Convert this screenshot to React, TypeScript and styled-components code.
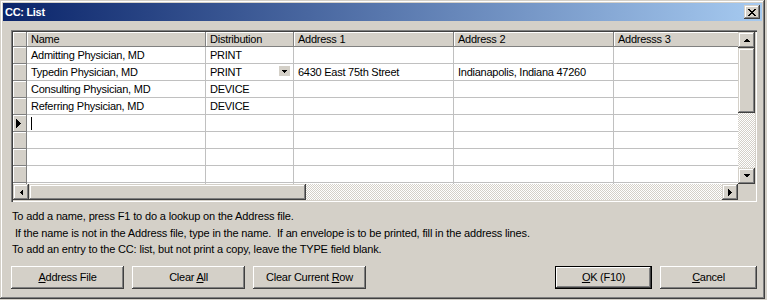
import React from "react";
import styled, { createGlobalStyle, css } from "styled-components";

const GlobalStyle = createGlobalStyle`
    html, body {
        margin: 0;
        padding: 0;
        background: #d4d0c8;
    }
    body {
        font-family: "Liberation Sans", Arial, sans-serif;
        font-size: 11px;
        letter-spacing: -0.25px;
        color: #000;
    }
`

const raised = css`
    background: #d4d0c8;
    box-shadow: inset -1px -1px #404040, inset 1px 1px #d4d0c8,
        inset -2px -2px #808080, inset 2px 2px #ffffff;
`

const Window = styled.div`
    ${raised};
    box-sizing: border-box;
    width: 765px;
    height: 299px;
    padding: 3px;
    display: flex;
    flex-direction: column;
`

const TitleBar = styled.div`
    height: 18px;
    display: flex;
    align-items: center;
    justify-content: space-between;
    padding: 0 2px;
    background: linear-gradient(to right, #0a246a, #a6caf0);
`

const TitleText = styled.span`
    color: #fff;
    font-weight: bold;
    letter-spacing: -0.3px;
`

const CloseButton = styled.div`
    ${raised};
    width: 16px;
    height: 14px;
    display: flex;
    align-items: center;
    justify-content: center;
`

const Content = styled.div`
    padding: 9px 5px 0 8px;
    display: flex;
    flex-direction: column;
`

const GridFrame = styled.div`
    box-sizing: border-box;
    width: 746px;
    height: 172px;
    padding: 2px;
    background: #d4d0c8;
    box-shadow: inset 1px 1px #808080, inset 2px 2px #404040,
        inset -1px -1px #ffffff, inset -2px -2px #d4d0c8;
`

const GridInner = styled.div`
    display: grid;
    grid-template-columns: 725px 17px;
    grid-template-rows: 152px 16px;
`

const Table = styled.div<{ $cols: string }>`
    display: grid;
    grid-template-columns: ${(p) => p.$cols};
    grid-template-rows: 15px;
    grid-auto-rows: 17px;
    background: #fff;
    overflow: hidden;
`

const HeaderCell = styled.div`
    box-sizing: border-box;
    background: #d4d0c8;
    border-right: 1px solid #808080;
    border-bottom: 1px solid #808080;
    box-shadow: inset 1px 1px #ffffff;
    padding: 0 4px;
    line-height: 14px;
    white-space: nowrap;
    overflow: hidden;
`

const RowHeader = styled.div`
    box-sizing: border-box;
    background: #d4d0c8;
    border-right: 1px solid #808080;
    border-bottom: 1px solid #808080;
    box-shadow: inset 1px 1px #ffffff;
    display: flex;
    align-items: center;
    padding-left: 3px;
`

const Cell = styled.div`
    box-sizing: border-box;
    position: relative;
    border-right: 1px solid #c0c0c0;
    border-bottom: 1px solid #c0c0c0;
    padding: 0 4px;
    line-height: 16px;
    white-space: nowrap;
    overflow: hidden;
    display: flex;
    align-items: center;
`

const Caret = styled.span`
    display: inline-block;
    width: 1px;
    height: 13px;
    background: #000;
`

const DropButton = styled.div`
    position: absolute;
    right: 3px;
    top: 2px;
    width: 11px;
    height: 10px;
    background: #d4d0c8;
    display: flex;
    align-items: center;
    justify-content: center;
`

const VScroll = styled.div`
    display: flex;
    flex-direction: column;
`

const HScroll = styled.div`
    display: flex;
`

const ScrollButton = styled.div`
    ${raised};
    flex: 0 0 16px;
    display: flex;
    align-items: center;
    justify-content: center;
`

const Thumb = styled.div<{ $size: number }>`
    ${raised};
    flex: 0 0 ${(p) => p.$size}px;
`

const Track = styled.div`
    flex: 1;
    background: repeating-conic-gradient(#ffffff 0 25%, #d4d0c8 0 50%) 0 0 / 2px 2px;
`

const Corner = styled.div`
    background: #d4d0c8;
`

const HelpText = styled.div`
    margin-top: 6px;
    padding-left: 1px;
    line-height: 16.5px;
    letter-spacing: -0.15px;
    white-space: pre;
`

const ButtonBar = styled.div`
    margin-top: 8px;
    display: flex;
    gap: 8px;
`

const Spacer = styled.div`
    flex: 1;
`

const Button = styled.div<{ $w: number; $default?: boolean }>`
    box-sizing: border-box;
    width: ${(p) => p.$w}px;
    height: 23px;
    display: flex;
    align-items: center;
    justify-content: center;
    background: #d4d0c8;
    box-shadow: inset -1px -1px #404040, inset 1px 1px #ffffff,
        inset -2px -2px #808080;
    ${(p) =>
        p.$default &&
        css`
            box-shadow: inset 0 0 0 1px #000, inset -2px -2px #404040,
                inset 2px 2px #ffffff, inset -3px -3px #808080;
        `}

    u {
        text-decoration: underline;
    }
`

const Arrow = ({ dir }: { dir: "up" | "down" | "left" | "right" }) => {
    const pts = {
        up: "0,4 7,4 3.5,0.5",
        down: "0,0 7,0 3.5,3.5",
        left: "4,0 4,7 0.5,3.5",
        right: "0,0 0,7 3.5,3.5",
    }[dir];
    const vertical = dir === "up" || dir === "down";
    return (
        <svg width={vertical ? 7 : 4} height={vertical ? 4 : 7} shapeRendering="crispEdges">
            <polygon points={pts} fill="#000" />
        </svg>
    );
};

const CloseGlyph = () => (
    <svg width="8" height="7" shapeRendering="crispEdges">
        <path d="M0 0h2v1h-2zM6 0h2v1h-2zM1 1h2v1h-2zM5 1h2v1h-2zM2 2h4v1h-4zM3 3h2v1h-2zM2 4h4v1h-4zM1 5h2v1h-2zM5 5h2v1h-2zM0 6h2v1h-2zM6 6h2v1h-2z" fill="#000" />
    </svg>
);

const columns = [
    { label: "Name", width: 179 },
    { label: "Distribution", width: 88 },
    { label: "Address 1", width: 160 },
    { label: "Address 2", width: 160 },
    { label: "Addresss 3", width: 140 },
];

const rows = [
    ["Admitting Physician, MD", "PRINT", "", "", ""],
    ["Typedin Physician, MD", "PRINT", "6430 East 75th Street", "Indianapolis, Indiana 47260", ""],
    ["Consulting Physician, MD", "DEVICE", "", "", ""],
    ["Referring Physician, MD", "DEVICE", "", "", ""],
    ["", "", "", "", ""],
    ["", "", "", "", ""],
    ["", "", "", "", ""],
    ["", "", "", "", ""],
    ["", "", "", "", ""],
];

const currentRow = 4;
const dropRow = 1;

const App = () => {
    const cols = "14px " + columns.map((c) => c.width + "px").join(" ");

    return (
        <>
            <GlobalStyle />
            <Window>
                <TitleBar>
                    <TitleText>CC: List</TitleText>
                    <CloseButton>
                        <CloseGlyph />
                    </CloseButton>
                </TitleBar>
                <Content>
                    <GridFrame>
                        <GridInner>
                            <Table $cols={cols}>
                                <HeaderCell />
                                {columns.map((c) => (
                                    <HeaderCell key={c.label}>{c.label}</HeaderCell>
                                ))}
                                {rows.map((r, i) => (
                                    <React.Fragment key={i}>
                                        <RowHeader>
                                            {i === currentRow && (
                                                <svg width="5" height="9" shapeRendering="crispEdges">
                                                    <polygon points="0,0 0,9 5,4.5" fill="#000" />
                                                </svg>
                                            )}
                                        </RowHeader>
                                        {r.map((v, j) => (
                                            <Cell key={j}>
                                                {i === currentRow && j === 0 ? <Caret /> : v}
                                                {i === dropRow && j === 1 && (
                                                    <DropButton>
                                                        <svg width="5" height="3" shapeRendering="crispEdges">
                                                            <polygon points="0,0 5,0 2.5,3" fill="#000" />
                                                        </svg>
                                                    </DropButton>
                                                )}
                                            </Cell>
                                        ))}
                                    </React.Fragment>
                                ))}
                            </Table>
                            <VScroll>
                                <ScrollButton>
                                    <Arrow dir="up" />
                                </ScrollButton>
                                <Thumb $size={65} />
                                <Track />
                                <ScrollButton>
                                    <Arrow dir="down" />
                                </ScrollButton>
                            </VScroll>
                            <HScroll>
                                <ScrollButton>
                                    <Arrow dir="left" />
                                </ScrollButton>
                                <Thumb $size={277} />
                                <Track />
                                <ScrollButton>
                                    <Arrow dir="right" />
                                </ScrollButton>
                            </HScroll>
                            <Corner />
                        </GridInner>
                    </GridFrame>
                    <HelpText>
                        {"To add a name, press F1 to do a lookup on the Address file.\n"}
                        {" If the name is not in the Address file, type in the name.  If an envelope is to be printed, fill in the address lines.\n"}
                        {"To add an entry to the CC: list, but not print a copy, leave the TYPE field blank."}
                    </HelpText>
                    <ButtonBar>
                        <Button $w={113}>
                            <span><u>A</u>ddress File</span>
                        </Button>
                        <Button $w={113}>
                            <span>Clear <u>A</u>ll</span>
                        </Button>
                        <Button $w={113}>
                            <span>Clear Current <u>R</u>ow</span>
                        </Button>
                        <Spacer />
                        <Button $w={97} $default>
                            <span><u>O</u>K (F10)</span>
                        </Button>
                        <Button $w={97}>
                            <span><u>C</u>ancel</span>
                        </Button>
                    </ButtonBar>
                </Content>
            </Window>
        </>
    );
};

export default App;
